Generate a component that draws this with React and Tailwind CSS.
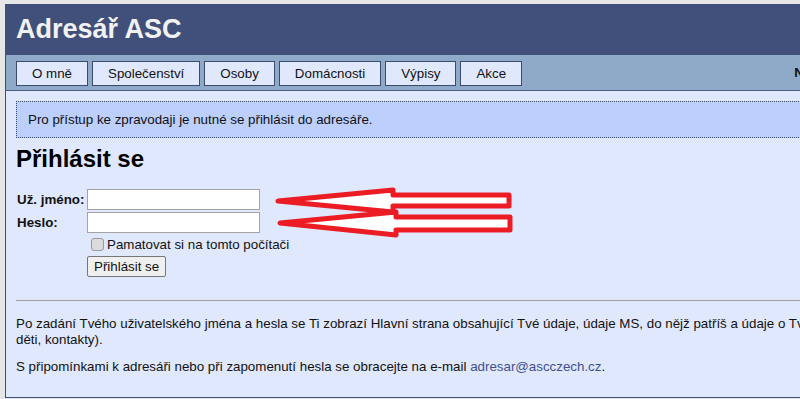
import React from "react";

export default function App() {
  const navItems = ["O mně", "Společenství", "Osoby", "Domácnosti", "Výpisy", "Akce"];
  return (
    <div className="relative h-[399px] w-[800px] overflow-hidden bg-[#e6e6e6] font-['Liberation_Sans',Arial,sans-serif] text-[13.33px] text-[#111]">
      <div className="ml-[5px] mt-[4px] flex h-[394px] w-[1000px] flex-col border-b border-l border-[#3f4f78] bg-[#e0e8fe]">
        <div className="flex h-[51px] shrink-0 items-center bg-[#40507a] pl-[10px]">
          <h1 className="text-[27px] font-bold leading-none text-[#f2f2f2]">Adresář ASC</h1>
        </div>
        <div className="flex h-[36px] shrink-0 items-start border-b border-[#4b5b80] bg-[#8eaac8] pl-[10px] pt-[6px]">
          <div className="flex gap-[4px]">
            {navItems.map((n) => (
              <div
                key={n}
                className="flex h-[25px] items-center border border-[#3b4a70] bg-[#e0e8fe] px-[15px] leading-none"
              >
                {n}
              </div>
            ))}
          </div>
          <div className="ml-[272px] pt-[5px] font-bold leading-none">Nepřihlášen</div>
        </div>
        <div className="relative pl-[10px]">
          <div className="mt-[10px] flex h-[37px] items-center border border-dotted border-[#3b4a70] bg-[#bccffd] pl-[11px]">
            Pro přístup ke zpravodaji je nutné se přihlásit do adresáře.
          </div>
          <h2 className="mt-[7px] text-[24px] font-bold leading-[28px] text-black">Přihlásit se</h2>
          <div className="mt-[16px] flex flex-col gap-[2px]">
            <div className="flex items-center">
              <label className="w-[71px] pl-[1px] font-bold">Už. jméno:</label>
              <input className="h-[21px] w-[173px] border border-[#a3a3a3] bg-white outline-none" />
            </div>
            <div className="flex items-center">
              <label className="w-[71px] pl-[1px] font-bold">Heslo:</label>
              <input type="password" className="h-[21px] w-[173px] border border-[#a3a3a3] bg-white outline-none" />
            </div>
          </div>
          <div className="ml-[75px] mt-[2px] flex items-center gap-[3px]">
            <input
              type="checkbox"
              className="m-0 h-[13px] w-[13px] appearance-none rounded-[3px] border border-[#9a9a9a] bg-[#dcdcdc]"
            />
            <span>Pamatovat si na tomto počítači</span>
          </div>
          <button className="ml-[71px] mt-[1px] h-[21px] rounded-[2px] border border-[#767676] bg-[#efefef] px-[6px] leading-none">
            Přihlásit se
          </button>
          <div className="mt-[23px] border-t border-[#a0a0a0]"></div>
          <p className="mt-[15px] leading-[16px]">
            Po zadání Tvého uživatelského jména a hesla se Ti zobrazí Hlavní strana obsahující Tvé údaje, údaje MS, do nějž patříš a údaje o Tvé domácnosti (manžel/ka,
            <br />
            děti, kontakty).
          </p>
          <p className="mt-[11px] leading-[16px]">
            S připomínkami k adresáři nebo při zapomenutí hesla se obracejte na e-mail{" "}
            <a className="text-[#3f4f90]">adresar@ascczech.cz</a>.
          </p>
        </div>
      </div>
      <svg className="absolute left-0 top-0" width="800" height="399" viewBox="0 0 800 399">
        <polygon
          points="278,201 393,190 393,195 509,195 509,206 393,206 393,212"
          fill="#fff"
          stroke="#ec1c24"
          strokeWidth="5"
          strokeLinejoin="round"
        />
        <polygon
          points="280,223 396,212 396,217 510,217 510,230 396,230 396,235"
          fill="#fff"
          stroke="#ec1c24"
          strokeWidth="5"
          strokeLinejoin="round"
        />
      </svg>
    </div>
  );
}
